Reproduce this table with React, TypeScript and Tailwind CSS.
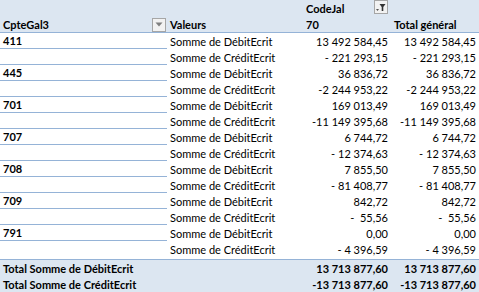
import React from 'react';

const ROWS = [
  { code: '411', debit: '13 492 584,45', credit: '- 221 293,15' },
  { code: '445', debit: '36 836,72', credit: '-2 244 953,22' },
  { code: '701', debit: '169 013,49', credit: '-11 149 395,68' },
  { code: '707', debit: '6 744,72', credit: '- 12 374,63' },
  { code: '708', debit: '7 855,50', credit: '- 81 408,77' },
  { code: '709', debit: '842,72', credit: '-  55,56' },
  { code: '791', debit: '0,00', credit: '- 4 396,59' },
];

const font = "font-['Lato','Liberation_Sans',sans-serif]";

const DropButton: React.FC<{ filter?: boolean }> = ({ filter }) => (
  <div className="w-[14px] h-[14px] border border-[#a6a6a6] bg-[#f2f2f2] flex items-center justify-center">
    {filter ? (
      <svg width="10" height="9" viewBox="0 0 10 9">
        <path d="M0 6 L3 6 L1.5 8 Z" fill="#555" />
        <path d="M3.5 1 L9.5 1 L7.3 4 L7.3 8 L5.7 8 L5.7 4 Z" fill="#333" />
      </svg>
    ) : (
      <svg width="8" height="5" viewBox="0 0 8 5">
        <path d="M0.5 0.5 L7.5 0.5 L4 4.5 Z" fill="#7f7f7f" />
      </svg>
    )}
  </div>
);

const App: React.FC = () => {
  return (
    <div className={`w-[479px] h-[292px] bg-white overflow-hidden text-[11px] leading-none text-black ${font}`}>
      {/* header */}
      <div className="bg-[#dce6f1] border-b border-[#95b3d7]">
        <div className="flex h-[17px] items-center">
          <div className="w-[305px]" />
          <div className="w-[86px] flex items-center justify-between pl-[1px] pr-[3px] font-bold">
            <span>CodeJal</span>
            <div className="-mt-[3px]"><DropButton filter /></div>
          </div>
        </div>
        <div className="flex h-[15px] items-center font-bold">
          <div className="w-[167px] flex items-center justify-between pl-[3px] pr-[1px]">
            <span>CpteGal3</span>
            <DropButton />
          </div>
          <div className="w-[138px] pl-[3px]">Valeurs</div>
          <div className="w-[86px] pl-[1px]">70</div>
          <div className="w-[88px] pl-[3px]">Total général</div>
        </div>
      </div>

      {/* body */}
      {ROWS.map(r => (
        <React.Fragment key={r.code}>
          <div className="flex h-[16px] items-center">
            <div className="w-[167px] h-full flex items-center pl-[3px] font-bold border-b border-[#95b3d7]">{r.code}</div>
            <div className="w-[138px] pl-[3px]">Somme de DébitEcrit</div>
            <div className="w-[86px] pr-[3px] text-right whitespace-pre">{r.debit}</div>
            <div className="w-[88px] pr-[3px] text-right whitespace-pre">{r.debit}</div>
          </div>
          <div className="flex h-[16px] items-center">
            <div className={`w-[167px] h-full ${r.code === '791' ? '' : 'border-b border-[#95b3d7]'}`} />
            <div className="w-[138px] pl-[3px]">Somme de CréditEcrit</div>
            <div className="w-[86px] pr-[3px] text-right whitespace-pre">{r.credit}</div>
            <div className="w-[88px] pr-[3px] text-right whitespace-pre">{r.credit}</div>
          </div>
        </React.Fragment>
      ))}

      {/* totals */}
      <div className="bg-[#dce6f1] border-t border-[#95b3d7] mt-[2px] font-bold h-[40px]">
        <div className="flex h-[16px] items-center">
          <div className="w-[305px] pl-[3px]">Total Somme de DébitEcrit</div>
          <div className="w-[86px] pr-[3px] text-right">13 713 877,60</div>
          <div className="w-[88px] pr-[3px] text-right">13 713 877,60</div>
        </div>
        <div className="flex h-[16px] items-center">
          <div className="w-[305px] pl-[3px]">Total Somme de CréditEcrit</div>
          <div className="w-[86px] pr-[3px] text-right">-13 713 877,60</div>
          <div className="w-[88px] pr-[3px] text-right">-13 713 877,60</div>
        </div>
      </div>
    </div>
  );
};

export default App;
